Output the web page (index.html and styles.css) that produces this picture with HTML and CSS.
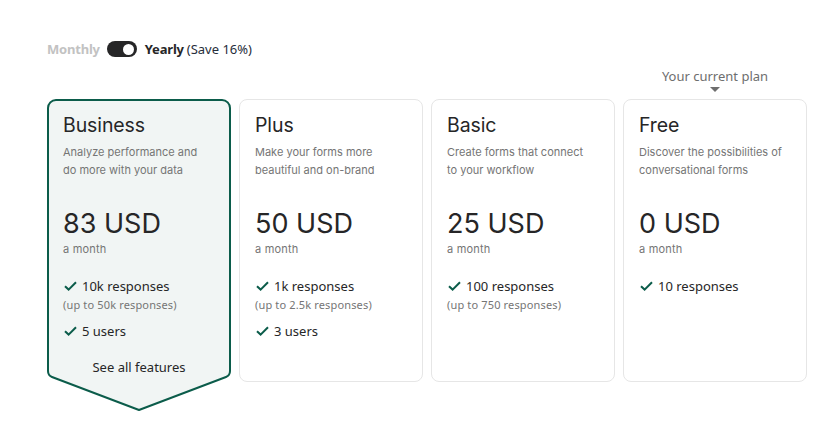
FILE: index.html
```html
<!DOCTYPE html>
<html lang="en">
<head>
<meta charset="utf-8">
<title>Plans</title>
<link rel="stylesheet" href="styles.css">
</head>
<body>
<div class="page">
  <div class="billing">
    <span class="opt opt-off">Monthly</span>
    <span class="switch"><span class="knob"></span></span>
    <span class="opt opt-on">Yearly</span>
    <span class="save">(Save 16%)</span>
  </div>
  <div class="plans">
    <div class="current">
      <span class="current-text">Your current plan</span>
      <span class="caret"></span>
    </div>

    <div class="card card-selected">
      <svg class="card-bg" width="184" height="312" viewBox="0 0 184 312" aria-hidden="true">
        <path d="M1,9 A8,8 0 0 1 9,1 H175 A8,8 0 0 1 183,9 V272 Q183,276.5 179,278 L92,311 L5,278 Q1,276.5 1,272 Z" fill="#f1f5f4" stroke="#0b5c4a" stroke-width="2" stroke-linejoin="round"/>
      </svg>
      <div class="card-body">
        <h2 class="title">Business</h2>
        <p class="desc">Analyze performance and do more with your data</p>
        <div class="price">83 USD</div>
        <div class="period">a month</div>
        <ul class="features">
          <li><span class="feat"><svg class="check" width="13" height="10" viewBox="0 0 13 10"><path d="M1,5.2 L4.6,8.6 L12,1.2" fill="none" stroke="#0b5c4a" stroke-width="2"/></svg>10k responses</span><span class="sub">(up to 50k responses)</span></li>
          <li><span class="feat"><svg class="check" width="13" height="10" viewBox="0 0 13 10"><path d="M1,5.2 L4.6,8.6 L12,1.2" fill="none" stroke="#0b5c4a" stroke-width="2"/></svg>5 users</span></li>
        </ul>
        <div class="see-all">See all features</div>
      </div>
    </div>

    <div class="card">
      <div class="card-body">
        <h2 class="title">Plus</h2>
        <p class="desc">Make your forms more beautiful and on-brand</p>
        <div class="price">50 USD</div>
        <div class="period">a month</div>
        <ul class="features">
          <li><span class="feat"><svg class="check" width="13" height="10" viewBox="0 0 13 10"><path d="M1,5.2 L4.6,8.6 L12,1.2" fill="none" stroke="#0b5c4a" stroke-width="2"/></svg>1k responses</span><span class="sub">(up to 2.5k responses)</span></li>
          <li><span class="feat"><svg class="check" width="13" height="10" viewBox="0 0 13 10"><path d="M1,5.2 L4.6,8.6 L12,1.2" fill="none" stroke="#0b5c4a" stroke-width="2"/></svg>3 users</span></li>
        </ul>
      </div>
    </div>

    <div class="card">
      <div class="card-body">
        <h2 class="title">Basic</h2>
        <p class="desc">Create forms that connect to your workflow</p>
        <div class="price">25 USD</div>
        <div class="period">a month</div>
        <ul class="features">
          <li><span class="feat"><svg class="check" width="13" height="10" viewBox="0 0 13 10"><path d="M1,5.2 L4.6,8.6 L12,1.2" fill="none" stroke="#0b5c4a" stroke-width="2"/></svg>100 responses</span><span class="sub">(up to 750 responses)</span></li>
        </ul>
      </div>
    </div>

    <div class="card">
      <div class="card-body">
        <h2 class="title">Free</h2>
        <p class="desc">Discover the possibilities of conversational forms</p>
        <div class="price">0 USD</div>
        <div class="period">a month</div>
        <ul class="features">
          <li><span class="feat"><svg class="check" width="13" height="10" viewBox="0 0 13 10"><path d="M1,5.2 L4.6,8.6 L12,1.2" fill="none" stroke="#0b5c4a" stroke-width="2"/></svg>10 responses</span></li>
        </ul>
      </div>
    </div>
  </div>
</div>
</body>
</html>
```

FILE: styles.css
```css
* { box-sizing: border-box; }

html, body {
  margin: 0;
  padding: 0;
  background: #ffffff;
}

body {
  font-family: "Noto Sans", "Open Sans", sans-serif;
  color: #262627;
}

.page {
  padding: 40px 0 0 47px;
}

.billing {
  display: flex;
  align-items: center;
  height: 18px;
  font-size: 13px;
  line-height: 18px;
}

.opt {
  font-weight: 700;
  letter-spacing: -0.2px;
}

.opt-off {
  color: #c2c2c2;
  margin-right: 7px;
}

.opt-on {
  color: #262627;
  margin-left: 8px;
}

.save {
  margin-left: 3px;
  color: #262d3a;
  font-size: 13px;
}

.switch {
  width: 30px;
  height: 16px;
  border-radius: 8px;
  background: #262627;
  display: flex;
  align-items: center;
  justify-content: flex-end;
  padding-right: 3px;
}

.knob {
  width: 11px;
  height: 11px;
  border-radius: 50%;
  background: #ffffff;
}

.plans {
  display: grid;
  grid-template-columns: repeat(4, 184px);
  column-gap: 8px;
  align-items: start;
}

.current {
  grid-column: 4;
  grid-row: 1;
  display: flex;
  flex-direction: column;
  align-items: center;
  padding-top: 9px;
  height: 41px;
}

.current-text {
  font-family: "Noto Sans", sans-serif;
  font-size: 13px;
  line-height: 18px;
  color: #6e6e6e;
}

.caret {
  margin-top: 2px;
  width: 0;
  height: 0;
  border-left: 5px solid transparent;
  border-right: 5px solid transparent;
  border-top: 5px solid #6e6e6e;
}

.card {
  grid-row: 2;
  position: relative;
  height: 283px;
  border: 1px solid #e6e6e6;
  border-radius: 8px;
  background: #ffffff;
  padding: 12px 15px 0;
}

.card-selected {
  height: 312px;
  border: 0;
  background: transparent;
  padding: 13px 16px 0;
}

.card-bg {
  position: absolute;
  left: 0;
  top: 0;
  display: block;
}

.card-body {
  position: relative;
}

.title {
  margin: 0;
  font-family: Inter, "Noto Sans", sans-serif;
  font-weight: 400;
  font-size: 19.5px;
  line-height: 26px;
  color: #262627;
  letter-spacing: -0.1px;
}

.desc {
  margin: 5px 0 0;
  max-width: 146px;
  font-family: Inter, "Noto Sans", sans-serif;
  font-size: 11px;
  line-height: 18px;
  color: #757575;
  height: 36px;
}

.price {
  margin-top: 28px;
  font-family: Inter, "Noto Sans", sans-serif;
  font-size: 27px;
  line-height: 34px;
  color: #262627;
}

.period {
  font-family: Inter, "Noto Sans", sans-serif;
  font-size: 11px;
  line-height: 16px;
  letter-spacing: 0.2px;
  color: #757575;
}

.features {
  list-style: none;
  margin: 19px 0 0;
  padding: 0;
}

.features li {
  display: flex;
  flex-direction: column;
}

.features li + li {
  margin-top: 8px;
}

.feat {
  display: flex;
  align-items: center;
  font-size: 13px;
  line-height: 20px;
  color: #262627;
}

.check {
  margin: 0 5px 0 1px;
  flex: none;
}

.sub {
  font-size: 11px;
  line-height: 16px;
  letter-spacing: 0.15px;
  color: #757575;
  margin-top: 1px;
}

.see-all {
  margin-top: 16px;
  text-align: center;
  font-size: 13px;
  line-height: 20px;
  color: #262627;
}
```
